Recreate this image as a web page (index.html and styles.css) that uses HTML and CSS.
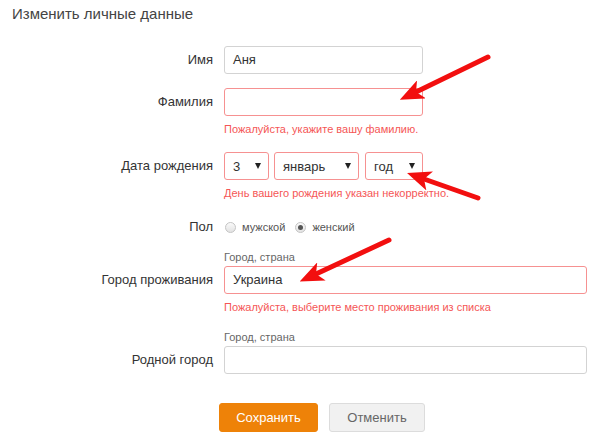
FILE: index.html
```html
<!DOCTYPE html>
<html lang="ru">
<head>
<meta charset="utf-8">
<title>Изменить личные данные</title>
<link rel="stylesheet" href="styles.css">
</head>
<body>
<div class="page">
  <h1 class="title">Изменить личные данные</h1>

  <div class="field f-first">
    <span class="lbl">Имя</span>
    <div class="input w-short">Аня</div>
  </div>

  <div class="field f-surname">
    <span class="lbl">Фамилия</span>
    <div class="input w-short invalid"></div>
    <div class="error">Пожалуйста, укажите вашу фамилию.</div>
  </div>

  <div class="field f-date">
    <span class="lbl">Дата рождения</span>
    <div class="selects">
      <div class="select invalid s-day"><span>3</span><i class="caret"></i></div>
      <div class="select invalid s-month"><span>январь</span><i class="caret"></i></div>
      <div class="select invalid s-year"><span>год</span><i class="caret"></i></div>
    </div>
    <div class="error">День вашего рождения указан некорректно.</div>
  </div>

  <div class="field f-sex">
    <span class="lbl">Пол</span>
    <div class="radios">
      <span class="radio"></span><span class="rlabel">мужской</span>
      <span class="radio checked"></span><span class="rlabel">женский</span>
    </div>
  </div>

  <div class="field f-city">
    <div class="hint">Город, страна</div>
    <span class="lbl">Город проживания</span>
    <div class="input w-long invalid">Украина</div>
    <div class="error">Пожалуйста, выберите место проживания из списка</div>
  </div>

  <div class="field f-home">
    <div class="hint">Город, страна</div>
    <span class="lbl">Родной город</span>
    <div class="input w-long"></div>
  </div>

  <div class="buttons">
    <button class="btn btn-save">Сохранить</button>
    <button class="btn btn-cancel">Отменить</button>
  </div>

  <svg class="arrows" width="600" height="444" viewBox="0 0 600 444">
    <defs>
      <marker id="head" markerUnits="userSpaceOnUse" markerWidth="24" markerHeight="20" refX="6" refY="10" orient="auto" viewBox="0 0 24 20">
        <path d="M0,0 L24,10 L0,20 L6,10 Z" fill="#f20f0f"/>
      </marker>
    </defs>
    <line x1="488" y1="57" x2="416" y2="92" class="arrow" marker-end="url(#head)"/>
    <line x1="478" y1="198" x2="424" y2="179" class="arrow" marker-end="url(#head)"/>
    <line x1="389" y1="240" x2="316" y2="274" class="arrow" marker-end="url(#head)"/>
  </svg>
</div>
</body>
</html>
```

FILE: styles.css
```css
html, body {
  margin: 0;
  padding: 0;
  background: #fff;
}
body {
  font-family: "Liberation Sans", Arial, sans-serif;
  color: #333;
}
.page {
  position: relative;
  width: 600px;
  height: 444px;
  overflow: hidden;
}
.title {
  margin: 0;
  padding: 5px 0 0 12px;
  font-size: 15px;
  line-height: 18px;
  font-weight: normal;
  color: #444;
}
.field {
  display: grid;
  grid-template-columns: 213px auto;
  column-gap: 11px;
  align-items: center;
  justify-content: start;
}
.lbl {
  grid-column: 1;
  justify-self: end;
  font-size: 13px;
  line-height: 16px;
  color: #333;
}
.input, .selects, .radios {
  grid-column: 2;
}
.hint {
  grid-column: 2;
  font-size: 11px;
  line-height: 14px;
  color: #666;
  margin-bottom: 2px;
}
.error {
  grid-column: 2;
  font-size: 11px;
  line-height: 14px;
  color: #f55656;
  margin-top: 6px;
}
.input {
  box-sizing: border-box;
  height: 28px;
  border: 1px solid #d3d3d3;
  border-radius: 3px;
  padding: 0 8px;
  font-size: 13px;
  line-height: 26px;
  color: #333;
}
.w-short { width: 199px; }
.w-long { width: 363px; }
.invalid { border-color: #f69191; }

.f-first { margin-top: 23px; }
.f-surname { margin-top: 14px; }
.f-date { margin-top: 16px; }
.f-sex { margin-top: 19px; }
.f-city { margin-top: 15px; }
.f-home { margin-top: 16px; }

.selects {
  display: flex;
  gap: 5px;
}
.select {
  box-sizing: border-box;
  height: 28px;
  border: 1px solid #d3d3d3;
  border-radius: 3px;
  padding: 0 7px 0 8px;
  display: flex;
  align-items: center;
  justify-content: space-between;
  font-size: 13px;
  color: #333;
}
.select.invalid { border-color: #f69191; }
.s-day { width: 45px; }
.s-month { width: 85px; }
.s-year { width: 58px; margin-left: 1px; }
.caret {
  width: 0;
  height: 0;
  border-left: 3.5px solid transparent;
  border-right: 3.5px solid transparent;
  border-top: 6px solid #222;
}

.radios {
  display: flex;
  align-items: center;
  height: 16px;
  padding-left: 1px;
}
.radio {
  box-sizing: border-box;
  width: 11px;
  height: 11px;
  border-radius: 50%;
  border: 1px solid #c4c4c4;
  background: linear-gradient(#fafafa, #e2e2e2);
  display: flex;
  align-items: center;
  justify-content: center;
}
.radio.checked::after {
  content: "";
  width: 5px;
  height: 5px;
  border-radius: 50%;
  background: #555;
}
.rlabel {
  font-size: 11px;
  color: #555;
  margin-left: 6px;
  margin-right: 10px;
}

.buttons {
  display: flex;
  gap: 11px;
  margin-top: 29px;
  padding-left: 219px;
}
.btn {
  box-sizing: border-box;
  height: 29px;
  border-radius: 3px;
  font-family: "Liberation Sans", Arial, sans-serif;
  font-size: 13px;
  padding: 0;
}
.btn-save {
  width: 99px;
  background: #ee8208;
  border: 1px solid #ee8208;
  color: #fff;
}
.btn-cancel {
  width: 96px;
  background: #f1f1f1;
  border: 1px solid #dcdcdc;
  color: #666;
}

.arrows {
  position: absolute;
  left: 0;
  top: 0;
  pointer-events: none;
}
.arrow {
  stroke: #f20f0f;
  stroke-width: 5;
  stroke-linecap: round;
}
```
